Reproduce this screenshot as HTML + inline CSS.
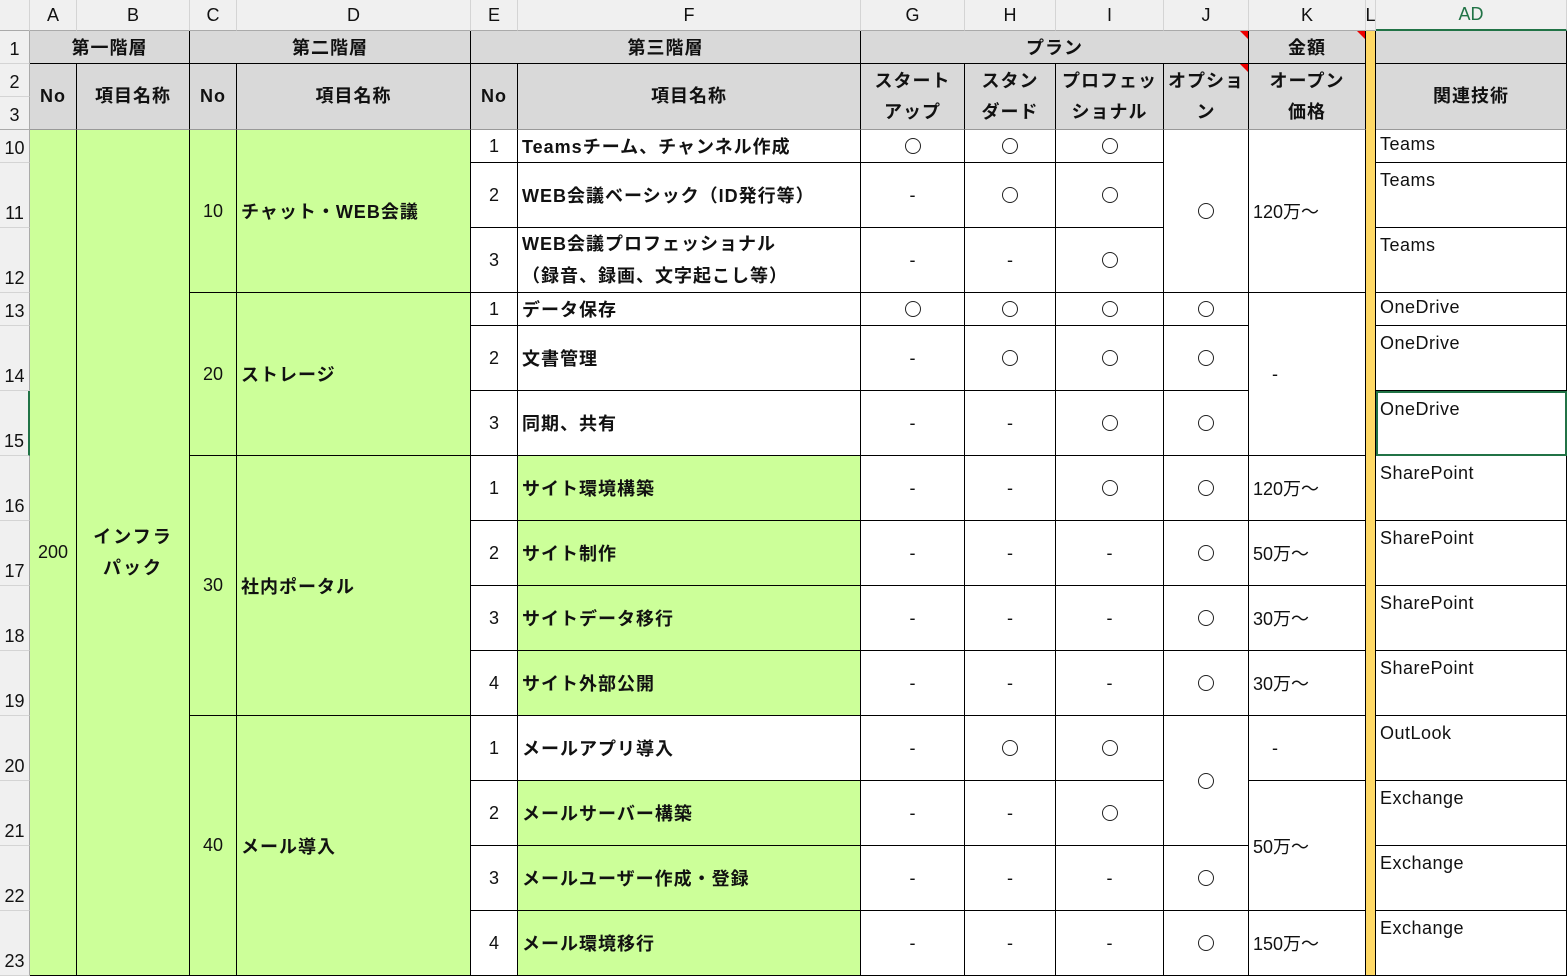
<!DOCTYPE html>
<html><head><meta charset="utf-8">
<style>
*{box-sizing:border-box;margin:0;padding:0}
body{width:1567px;height:977px;overflow:hidden;background:#fff;font-family:"Liberation Sans","Noto Sans CJK JP",sans-serif}
.g{display:grid;grid-template-columns:30px 47px 113px 47px 234px 47px 343px 104px 91px 108px 85px 117px 10px 191px;grid-template-rows:31px 33px 33px 33px 33px 65px 65px 33px 65px 65px 65px 65px 65px 65px 65px 65px 65px 65px;width:1567px}
.g>div{border-right:1px solid #000;border-bottom:1px solid #000;display:flex;align-items:center;justify-content:center;font-size:18px;color:#111;position:relative;white-space:nowrap}
.ch{background:#f0f0f0;color:#555;font-size:17px;font-weight:normal!important;border-right:1px solid #d4d4d4!important;border-bottom:1px solid #aaa!important}
.rh{background:#f0f0f0;color:#555;font-size:17px;border-right:1px solid #aaa!important;border-bottom:1px solid #d4d4d4!important;align-items:flex-end!important;padding-bottom:3px}
.h{background:#d9d9d9;font-weight:bold;letter-spacing:1px}
.h2{border-bottom:1px solid #999!important;line-height:31px;text-align:center}
.gr{background:#ccff99}
.b{font-weight:bold}
.l{justify-content:flex-start!important;padding-left:4px;font-weight:bold;letter-spacing:1px}
.y{background:#ffd966}
.ad{justify-content:flex-start!important;align-items:flex-start!important;padding:7px 0 0 4px;color:#222;letter-spacing:.5px}
.k{justify-content:flex-start!important;padding-left:4px}
.o{width:16px;height:16px;border:1.3px solid #222;border-radius:50%}
.tri:after{content:"";position:absolute;right:0;top:0;border-top:8px solid #e00;border-left:8px solid transparent}
</style></head><body>
<div class="g">
<div class="ch" style="grid-area:1/1"></div>
<div class="ch" style="grid-area:1/2">A</div><div class="ch" style="grid-area:1/3">B</div><div class="ch" style="grid-area:1/4">C</div><div class="ch" style="grid-area:1/5">D</div><div class="ch" style="grid-area:1/6">E</div><div class="ch" style="grid-area:1/7">F</div><div class="ch" style="grid-area:1/8">G</div><div class="ch" style="grid-area:1/9">H</div><div class="ch" style="grid-area:1/10">I</div><div class="ch" style="grid-area:1/11">J</div><div class="ch" style="grid-area:1/12">K</div><div class="ch" style="grid-area:1/13">L</div><div class="ch" style="grid-area:1/14;color:#217346;border-bottom:2px solid #217346!important">AD</div>

<div class="rh" style="grid-area:2/1">1</div><div class="rh" style="grid-area:3/1">2</div><div class="rh" style="grid-area:4/1;border-bottom:1px solid #aaa!important">3</div>
<div class="rh" style="grid-area:5/1">10</div><div class="rh" style="grid-area:6/1">11</div><div class="rh" style="grid-area:7/1">12</div><div class="rh" style="grid-area:8/1">13</div><div class="rh" style="grid-area:9/1">14</div><div class="rh" style="grid-area:10/1;border-right:2px solid #217346!important">15</div><div class="rh" style="grid-area:11/1">16</div><div class="rh" style="grid-area:12/1">17</div><div class="rh" style="grid-area:13/1">18</div><div class="rh" style="grid-area:14/1">19</div><div class="rh" style="grid-area:15/1">20</div><div class="rh" style="grid-area:16/1">21</div><div class="rh" style="grid-area:17/1">22</div><div class="rh" style="grid-area:18/1">23</div>

<div class="h" style="grid-area:2/2/3/4">第一階層</div>
<div class="h" style="grid-area:2/4/3/6">第二階層</div>
<div class="h" style="grid-area:2/6/3/8">第三階層</div>
<div class="h tri" style="grid-area:2/8/3/12">プラン</div>
<div class="h tri" style="grid-area:2/12">金額</div>
<div class="y" style="grid-area:2/13/19/14"></div>
<div class="h" style="grid-area:2/14"></div>

<div class="h h2" style="grid-area:3/2/5/3">No</div>
<div class="h h2" style="grid-area:3/3/5/4">項目名称</div>
<div class="h h2" style="grid-area:3/4/5/5">No</div>
<div class="h h2" style="grid-area:3/5/5/6">項目名称</div>
<div class="h h2" style="grid-area:3/6/5/7">No</div>
<div class="h h2" style="grid-area:3/7/5/8">項目名称</div>
<div class="h h2" style="grid-area:3/8/5/9">スタート<br>アップ</div>
<div class="h h2" style="grid-area:3/9/5/10">スタン<br>ダード</div>
<div class="h h2" style="grid-area:3/10/5/11">プロフェッ<br>ショナル</div>
<div class="h h2 tri" style="grid-area:3/11/5/12">オプショ<br>ン</div>
<div class="h h2" style="grid-area:3/12/5/13">オープン<br>価格</div>
<div class="h h2" style="grid-area:3/14/5/15">関連技術</div>

<div class="gr" style="grid-area:5/2/19/3">200</div>
<div class="gr b" style="grid-area:5/3/19/4;line-height:31px;text-align:center;letter-spacing:2px">インフラ<br>パック</div>
<div class="gr" style="grid-area:5/4/8/5">10</div><div class="gr l" style="grid-area:5/5/8/6">チャット・WEB会議</div>
<div class="gr" style="grid-area:8/4/11/5">20</div><div class="gr l" style="grid-area:8/5/11/6">ストレージ</div>
<div class="gr" style="grid-area:11/4/15/5">30</div><div class="gr l" style="grid-area:11/5/15/6">社内ポータル</div>
<div class="gr" style="grid-area:15/4/19/5">40</div><div class="gr l" style="grid-area:15/5/19/6">メール導入</div>

<div style="grid-area:5/6">1</div><div class="l" style="grid-area:5/7">Teamsチーム、チャンネル作成</div>
<div style="grid-area:6/6">2</div><div class="l" style="grid-area:6/7">WEB会議ベーシック（ID発行等）</div>
<div style="grid-area:7/6">3</div><div class="l" style="grid-area:7/7;line-height:32px">WEB会議プロフェッショナル<br>（録音、録画、文字起こし等）</div>
<div style="grid-area:8/6">1</div><div class="l" style="grid-area:8/7">データ保存</div>
<div style="grid-area:9/6">2</div><div class="l" style="grid-area:9/7">文書管理</div>
<div style="grid-area:10/6">3</div><div class="l" style="grid-area:10/7">同期、共有</div>
<div style="grid-area:11/6">1</div><div class="l gr" style="grid-area:11/7">サイト環境構築</div>
<div style="grid-area:12/6">2</div><div class="l gr" style="grid-area:12/7">サイト制作</div>
<div style="grid-area:13/6">3</div><div class="l gr" style="grid-area:13/7">サイトデータ移行</div>
<div style="grid-area:14/6">4</div><div class="l gr" style="grid-area:14/7">サイト外部公開</div>
<div style="grid-area:15/6">1</div><div class="l" style="grid-area:15/7">メールアプリ導入</div>
<div style="grid-area:16/6">2</div><div class="l gr" style="grid-area:16/7">メールサーバー構築</div>
<div style="grid-area:17/6">3</div><div class="l gr" style="grid-area:17/7">メールユーザー作成・登録</div>
<div style="grid-area:18/6">4</div><div class="l gr" style="grid-area:18/7">メール環境移行</div>

<div style="grid-area:5/8"><i class="o"></i></div><div style="grid-area:5/9"><i class="o"></i></div><div style="grid-area:5/10"><i class="o"></i></div>
<div style="grid-area:6/8">-</div><div style="grid-area:6/9"><i class="o"></i></div><div style="grid-area:6/10"><i class="o"></i></div>
<div style="grid-area:7/8">-</div><div style="grid-area:7/9">-</div><div style="grid-area:7/10"><i class="o"></i></div>
<div style="grid-area:5/11/8/12"><i class="o"></i></div>
<div class="k" style="grid-area:5/12/8/13">120万～</div>

<div style="grid-area:8/8"><i class="o"></i></div><div style="grid-area:8/9"><i class="o"></i></div><div style="grid-area:8/10"><i class="o"></i></div><div style="grid-area:8/11"><i class="o"></i></div>
<div style="grid-area:9/8">-</div><div style="grid-area:9/9"><i class="o"></i></div><div style="grid-area:9/10"><i class="o"></i></div><div style="grid-area:9/11"><i class="o"></i></div>
<div style="grid-area:10/8">-</div><div style="grid-area:10/9">-</div><div style="grid-area:10/10"><i class="o"></i></div><div style="grid-area:10/11"><i class="o"></i></div>
<div class="k" style="grid-area:8/12/11/13;padding-left:23px">-</div>

<div style="grid-area:11/8">-</div><div style="grid-area:11/9">-</div><div style="grid-area:11/10"><i class="o"></i></div><div style="grid-area:11/11"><i class="o"></i></div><div class="k" style="grid-area:11/12">120万～</div>
<div style="grid-area:12/8">-</div><div style="grid-area:12/9">-</div><div style="grid-area:12/10">-</div><div style="grid-area:12/11"><i class="o"></i></div><div class="k" style="grid-area:12/12">50万～</div>
<div style="grid-area:13/8">-</div><div style="grid-area:13/9">-</div><div style="grid-area:13/10">-</div><div style="grid-area:13/11"><i class="o"></i></div><div class="k" style="grid-area:13/12">30万～</div>
<div style="grid-area:14/8">-</div><div style="grid-area:14/9">-</div><div style="grid-area:14/10">-</div><div style="grid-area:14/11"><i class="o"></i></div><div class="k" style="grid-area:14/12">30万～</div>

<div style="grid-area:15/8">-</div><div style="grid-area:15/9"><i class="o"></i></div><div style="grid-area:15/10"><i class="o"></i></div>
<div style="grid-area:15/11/17/12"><i class="o"></i></div>
<div class="k" style="grid-area:15/12;padding-left:23px">-</div>
<div style="grid-area:16/8">-</div><div style="grid-area:16/9">-</div><div style="grid-area:16/10"><i class="o"></i></div>
<div class="k" style="grid-area:16/12/18/13">50万～</div>
<div style="grid-area:17/8">-</div><div style="grid-area:17/9">-</div><div style="grid-area:17/10">-</div><div style="grid-area:17/11"><i class="o"></i></div>
<div style="grid-area:18/8">-</div><div style="grid-area:18/9">-</div><div style="grid-area:18/10">-</div><div style="grid-area:18/11"><i class="o"></i></div><div class="k" style="grid-area:18/12">150万～</div>

<div class="ad" style="grid-area:5/14;padding-top:4px">Teams</div>
<div class="ad" style="grid-area:6/14">Teams</div>
<div class="ad" style="grid-area:7/14">Teams</div>
<div class="ad" style="grid-area:8/14;padding-top:4px">OneDrive</div>
<div class="ad" style="grid-area:9/14">OneDrive</div>
<div class="ad" style="grid-area:10/14;border:2px solid #217346;padding:6px 0 0 2px">OneDrive</div>
<div class="ad" style="grid-area:11/14">SharePoint</div>
<div class="ad" style="grid-area:12/14">SharePoint</div>
<div class="ad" style="grid-area:13/14">SharePoint</div>
<div class="ad" style="grid-area:14/14">SharePoint</div>
<div class="ad" style="grid-area:15/14">OutLook</div>
<div class="ad" style="grid-area:16/14">Exchange</div>
<div class="ad" style="grid-area:17/14">Exchange</div>
<div class="ad" style="grid-area:18/14">Exchange</div>
</div>
</body></html>
